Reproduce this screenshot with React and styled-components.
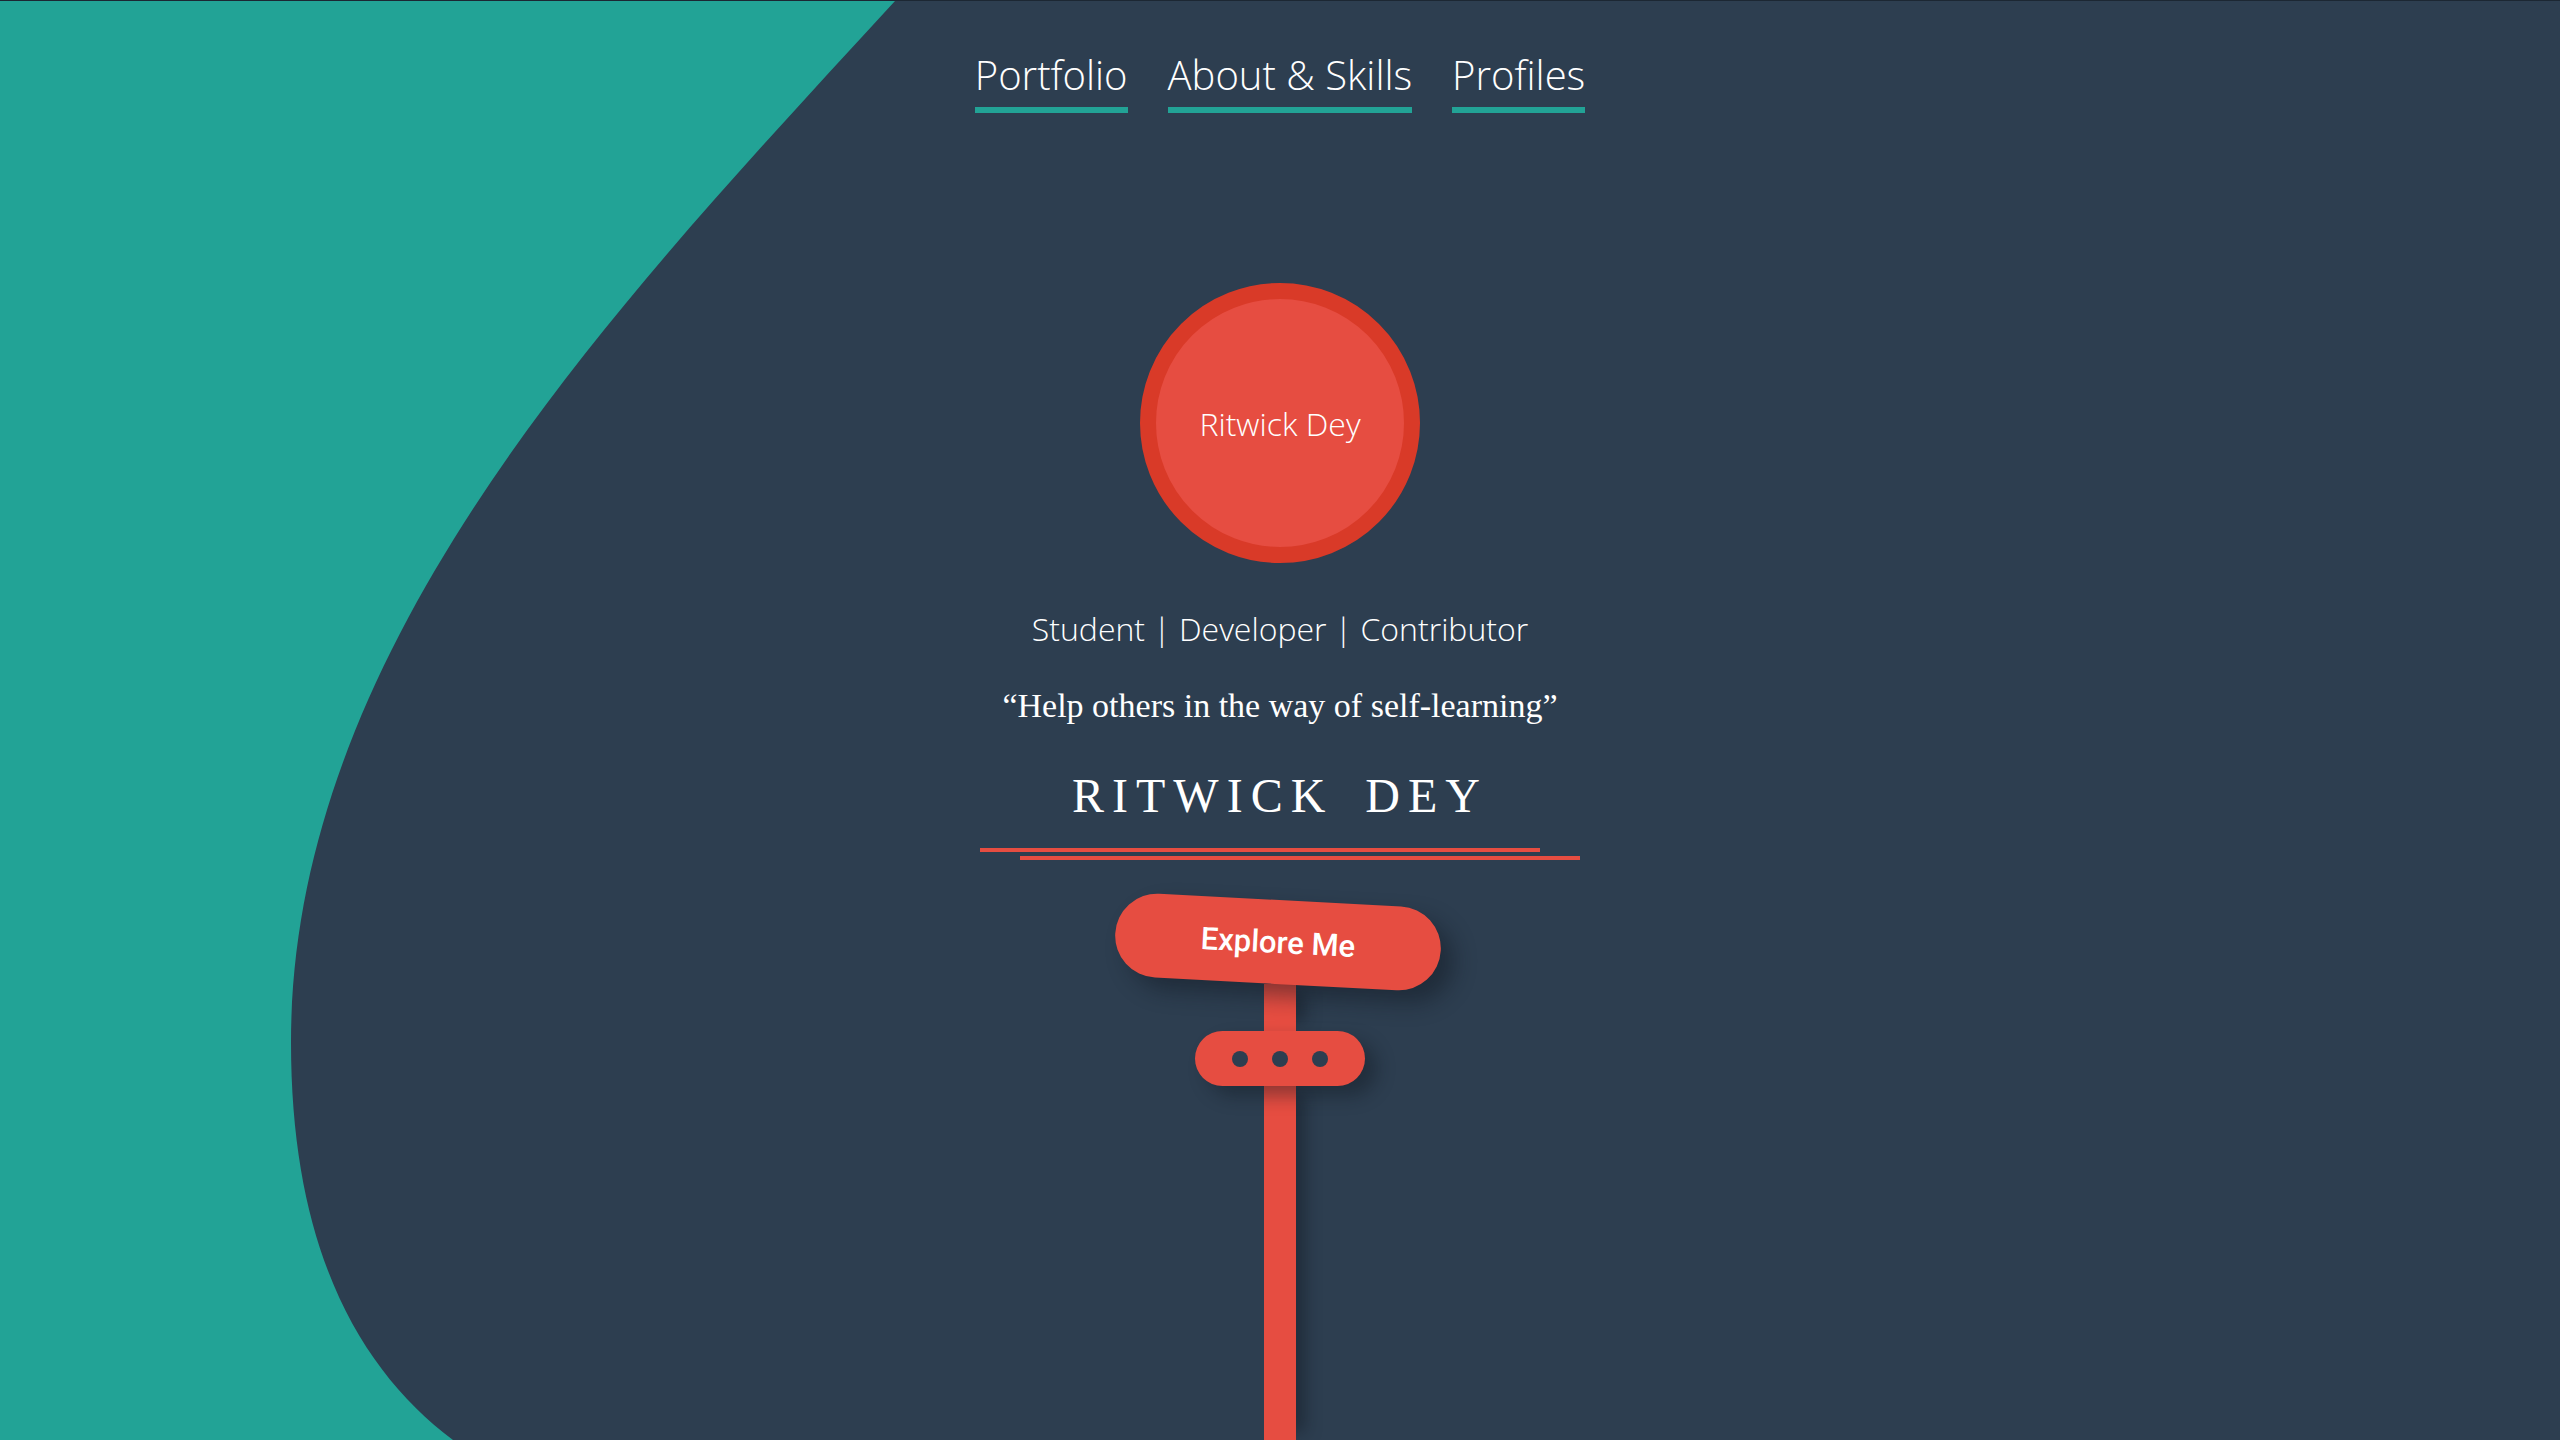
import React from 'react';
import styled, { createGlobalStyle } from 'styled-components';

const GlobalStyle = createGlobalStyle`
  html, body {
    margin: 0;
    padding: 0;
    background: #2d3e50;
    overflow: hidden;
  }
  #root {
    height: 100vh;
  }
`;

const navItems = ['Portfolio', 'About & Skills', 'Profiles'];

const App = () => {
  return (
    <Page>
      <GlobalStyle />
      <Wave viewBox="0 0 2560 1440" preserveAspectRatio="none">
        <path
          d="M0,0 L895,0 C620,300 291,640 291,1042 C291,1250 360,1370 453,1440 L0,1440 Z"
          fill="#22a396"
        />
      </Wave>
      <Content>
        <Nav>
          {navItems.map((item) => (
            <NavLink key={item} href="#">
              {item}
            </NavLink>
          ))}
        </Nav>
        <Avatar>
          <AvatarName>Ritwick Dey</AvatarName>
        </Avatar>
        <Roles>Student | Developer | Contributor</Roles>
        <Quote>“Help others in the way of self-learning”</Quote>
        <Name>RITWICK DEY</Name>
        <Underlines>
          <RedLine />
          <RedLine offset={40} />
        </Underlines>
        <Signpost>
          <ExploreButton>Explore Me</ExploreButton>
          <Pole height={47} />
          <DotsPill>
            <Dot />
            <Dot />
            <Dot />
          </DotsPill>
          <Pole grow />
        </Signpost>
      </Content>
    </Page>
  );
};

const Page = styled.div`
  position: relative;
  height: 100vh;
  overflow: hidden;
  background: #2d3e50;
  border-top: 1px solid #1c2733;
  box-sizing: border-box;
`;

const Wave = styled.svg`
  position: absolute;
  left: 0;
  top: 0;
  width: 100%;
  height: 100%;
  z-index: 0;
`;

const Content = styled.div`
  position: relative;
  z-index: 1;
  height: 100%;
  display: flex;
  flex-direction: column;
  align-items: center;
`;

const Nav = styled.nav`
  display: flex;
  gap: 40px;
  margin-top: 54px;
`;

const NavLink = styled.a`
  font-family: 'Open Sans', sans-serif;
  font-weight: 300;
  font-size: 40px;
  line-height: 40px;
  color: #ffffff;
  text-decoration: none;
  padding-bottom: 12px;
  border-bottom: 6px solid #22a396;
`;

const Avatar = styled.div`
  margin-top: 170px;
  width: 280px;
  height: 280px;
  box-sizing: border-box;
  border-radius: 50%;
  border: 16px solid #d93a28;
  background: #e64d41;
  display: flex;
  align-items: center;
  justify-content: center;
`;

const AvatarName = styled.span`
  font-family: 'Open Sans', sans-serif;
  font-weight: 300;
  font-size: 32px;
  color: #ffffff;
`;

const Roles = styled.div`
  margin-top: 50px;
  font-family: 'Open Sans', sans-serif;
  font-weight: 300;
  font-size: 32px;
  line-height: 32px;
  color: #ffffff;
`;

const Quote = styled.div`
  margin-top: 44px;
  font-family: 'Liberation Serif', serif;
  font-size: 34px;
  line-height: 34px;
  color: #ffffff;
`;

const Name = styled.h1`
  margin: 49px 0 0;
  font-family: 'Liberation Serif', serif;
  font-weight: 400;
  font-size: 48px;
  line-height: 48px;
  letter-spacing: 8px;
  word-spacing: 12px;
  color: #ffffff;
`;

const Underlines = styled.div`
  margin-top: 28px;
  width: 601px;
  display: flex;
  flex-direction: column;
  gap: 4px;
`;

const RedLine = styled.div`
  width: 560px;
  height: 4px;
  margin-left: ${(p) => p.offset || 0}px;
  background: #e64d41;
`;

const Signpost = styled.div`
  flex: 1;
  display: flex;
  flex-direction: column;
  align-items: center;
  margin-top: 40px;
`;

const ExploreButton = styled.button`
  position: relative;
  z-index: 2;
  width: 326px;
  height: 84px;
  margin-left: -4px;
  border: none;
  border-radius: 42px;
  background: #e64d41;
  color: #ffffff;
  font-family: Roboto, sans-serif;
  font-weight: 500;
  font-size: 31px;
  transform: rotate(3deg);
  box-shadow: 14px 12px 22px rgba(15, 22, 30, 0.45);
  cursor: pointer;
`;

const Pole = styled.div`
  width: 32px;
  background: #e64d41;
  box-shadow: 16px 0 16px -8px rgba(15, 22, 30, 0.5);
  ${(p) => (p.grow ? 'flex: 1;' : `height: ${p.height}px;`)}
`;

const DotsPill = styled.div`
  position: relative;
  z-index: 1;
  width: 170px;
  height: 55px;
  border-radius: 28px;
  background: #e64d41;
  display: flex;
  align-items: center;
  justify-content: center;
  gap: 24px;
  box-shadow: 12px 10px 18px rgba(15, 22, 30, 0.4);
`;

const Dot = styled.span`
  width: 16px;
  height: 16px;
  border-radius: 50%;
  background: #2d3e50;
`;

export default App;
